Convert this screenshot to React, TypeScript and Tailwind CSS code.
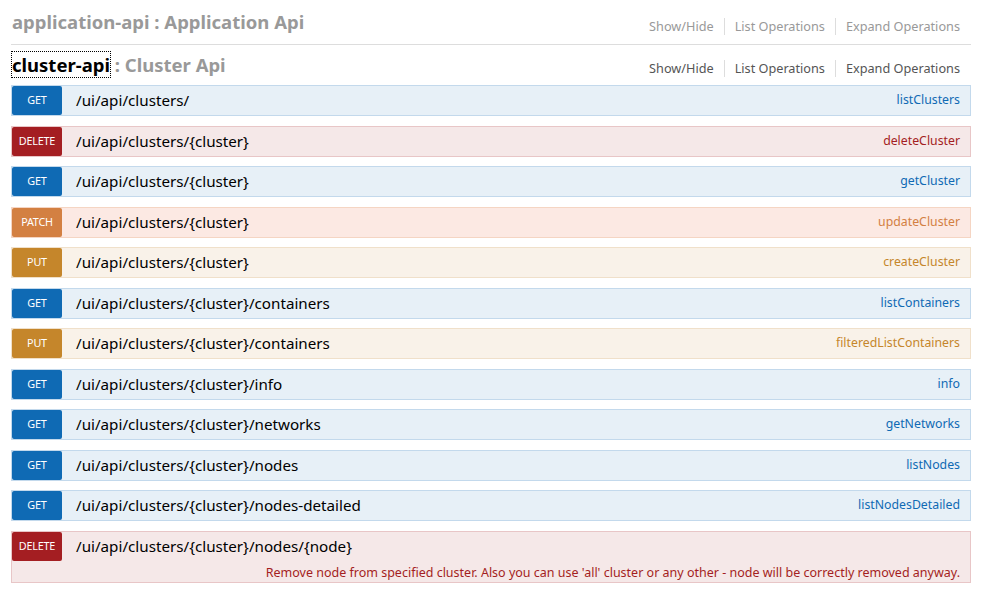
import React from "react";

type M = "GET" | "DELETE" | "PATCH" | "PUT";

const styles: Record<M, { row: string; badge: string; text: string }> = {
  GET: { row: "bg-[#e7f0f7] border-[#c3d9ec]", badge: "bg-[#0f6ab4]", text: "text-[#0f6ab4]" },
  DELETE: { row: "bg-[#f5e8e8] border-[#e8c6c7]", badge: "bg-[#a41e22]", text: "text-[#a41e22]" },
  PATCH: { row: "bg-[#fce9e3] border-[#f5d5c3]", badge: "bg-[#d38042]", text: "text-[#d38042]" },
  PUT: { row: "bg-[#f9f2e9] border-[#f0e0ca]", badge: "bg-[#c5862b]", text: "text-[#c5862b]" },
};

const ops: { m: M; path: string; nick: string }[] = [
  { m: "GET", path: "/ui/api/clusters/", nick: "listClusters" },
  { m: "DELETE", path: "/ui/api/clusters/{cluster}", nick: "deleteCluster" },
  { m: "GET", path: "/ui/api/clusters/{cluster}", nick: "getCluster" },
  { m: "PATCH", path: "/ui/api/clusters/{cluster}", nick: "updateCluster" },
  { m: "PUT", path: "/ui/api/clusters/{cluster}", nick: "createCluster" },
  { m: "GET", path: "/ui/api/clusters/{cluster}/containers", nick: "listContainers" },
  { m: "PUT", path: "/ui/api/clusters/{cluster}/containers", nick: "filteredListContainers" },
  { m: "GET", path: "/ui/api/clusters/{cluster}/info", nick: "info" },
  { m: "GET", path: "/ui/api/clusters/{cluster}/networks", nick: "getNetworks" },
  { m: "GET", path: "/ui/api/clusters/{cluster}/nodes", nick: "listNodes" },
  { m: "GET", path: "/ui/api/clusters/{cluster}/nodes-detailed", nick: "listNodesDetailed" },
];

function Options({ color, mt }: { color: string; mt: string }) {
  const items = ["Show/Hide", "List Operations", "Expand Operations"];
  return (
    <ul className={`flex items-center pr-[11px] text-[12.7px] ${mt} ${color}`}>
      {items.map((t, i) => (
        <li
          key={t}
          className={`leading-[17px] px-[10px] ${i < items.length - 1 ? "border-r border-[#dddddd]" : "pr-0"}`}
        >
          {t}
        </li>
      ))}
    </ul>
  );
}

function Heading({ m, path, nick }: { m: M; path: string; nick?: string }) {
  const s = styles[m];
  return (
    <div className="flex items-center h-[29px]">
      <div
        className={`w-[50px] h-[29px] flex items-center justify-center text-[10.8px] tracking-[-0.2px] text-white rounded-[2px] ${s.badge}`}
      >
        {m}
      </div>
      <div className="ml-[14px] flex-1 text-[15.2px] text-black">{path}</div>
      {nick && <div className={`pr-[10px] text-[12.3px] ${s.text}`}>{nick}</div>}
    </div>
  );
}

export default function App() {
  return (
    <div className="bg-white min-h-[591px] px-[11px] font-['Noto_Sans',sans-serif]">
      <div className="flex items-center justify-between h-[45px] border-b border-[#dddddd]">
        <h2 className="text-[18.5px] font-bold text-[#999999] pl-[1px]">application-api : Application Api</h2>
        <Options color="text-[#999999]" mt="mt-[8px]" />
      </div>
      <div className="flex items-center justify-between h-[40px]">
        <h2 className="text-[18.5px] font-bold text-[#999999] pl-[1px]">
          <span className="text-black outline-1 outline-dotted outline-black">cluster-api</span>
          <span> : Cluster Api</span>
        </h2>
        <Options color="text-[#555555]" mt="mt-[6px]" />
      </div>
      <div className="flex flex-col gap-[9.5px]">
        {ops.map((o, i) => (
          <div key={i} className={`border ${styles[o.m].row}`}>
            <Heading m={o.m} path={o.path} nick={o.nick} />
          </div>
        ))}
        <div className={`border ${styles.DELETE.row}`}>
          <Heading m="DELETE" path="/ui/api/clusters/{cluster}/nodes/{node}" />
          <div className="h-[21px] pt-[3px] pr-[10px] text-right text-[12.5px] leading-[18px] text-[#a41e22]">
            Remove node from specified cluster. Also you can use 'all' cluster or any other - node will be correctly removed anyway.
          </div>
        </div>
      </div>
    </div>
  );
}
